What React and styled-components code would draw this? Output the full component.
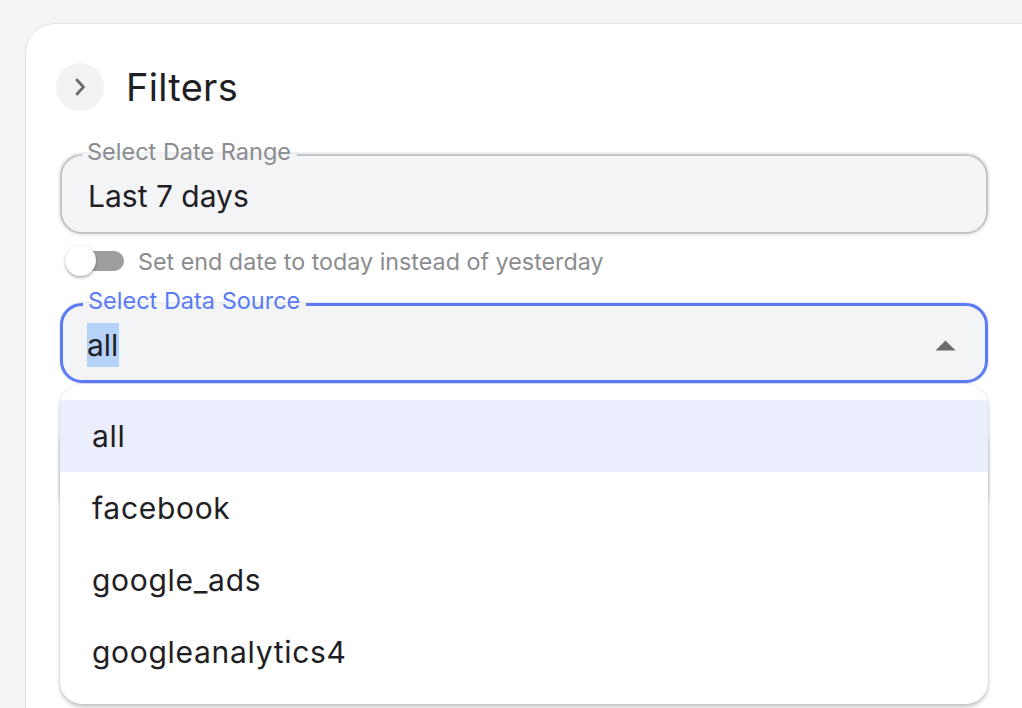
import React from "react";
import styled, { createGlobalStyle } from "styled-components";

const GlobalStyle = createGlobalStyle`
  html, body {
    margin: 0;
    padding: 0;
    background: #f3f4f6;
    overflow: hidden;
    font-family: Inter, "Liberation Sans", sans-serif;
    color: #1f2024;
  }
`;

const Page = styled.div`
  padding: 23px 0 0 25px;
  height: 708px;
  box-sizing: border-box;
`;

const Card = styled.div`
  width: 1100px;
  height: 800px;
  box-sizing: border-box;
  background: #ffffff;
  border: 1px solid #e1e2e4;
  border-radius: 30px;
  padding: 39px 0 0 34px;
  display: flex;
  flex-direction: column;
`;

const Content = styled.div`
  width: 928px;
  display: flex;
  flex-direction: column;
`;

const Header = styled.div`
  display: flex;
  align-items: center;
  gap: 22px;
  margin-left: -4px;
`;

const CollapseButton = styled.button`
  width: 48px;
  height: 48px;
  border-radius: 50%;
  border: none;
  padding: 0;
  background: #f2f2f3;
  display: flex;
  align-items: center;
  justify-content: center;
  color: #6b6b6b;
`;

const Title = styled.h2`
  margin: 0;
  font-size: 38px;
  font-weight: 400;
  letter-spacing: 0.3px;
  color: #1f2024;
`;

const Field = styled.fieldset`
  position: relative;
  margin: ${(p) => p.$top}px 0 0 0;
  padding: 0 24px 0 20px;
  height: 94px;
  box-sizing: border-box;
  background: #f3f4f6;
  border: ${(p) => (p.$focused ? "3px solid #5a7bf3" : "2px solid #c3c4c6")};
  border-radius: 22px;
  box-shadow: ${(p) => (p.$focused ? "0 0 0 1px #e6e8ee" : "0 0 0 2px #eeeff1")};
`;

const Legend = styled.legend`
  font-size: 23.5px;
  line-height: 24px;
  padding: 0 6px 6px 5px;
  color: ${(p) => (p.$focused ? "#5a7bf3" : "#8b8c8f")};
`;

const ValueRow = styled.div`
  height: 52px;
  display: flex;
  align-items: center;
  justify-content: space-between;
  padding-left: 6px;
  font-size: 30px;
  color: #1f2024;
`;

const Selected = styled.span`
  background: #b5d3f8;
  line-height: 44px;
  padding: 0 1px 0 0;
  margin-left: -2px;
`;

const ToggleRow = styled.label`
  display: flex;
  align-items: center;
  gap: 14px;
  height: 34px;
  margin-top: 10px;
  padding-left: 6px;
  font-size: 23.3px;
  color: #8b8c8f;
`;

const Switch = styled.span`
  position: relative;
  width: 58px;
  height: 20px;
  border-radius: 10px;
  background: #9e9e9e;
  flex-shrink: 0;
`;

const Thumb = styled.span`
  position: absolute;
  left: -1px;
  top: -6px;
  width: 31px;
  height: 31px;
  border-radius: 50%;
  background: #ffffff;
  box-shadow: 0 2px 3px rgba(0, 0, 0, 0.28), 0 0 1px rgba(0, 0, 0, 0.2);
`;

const SelectWrap = styled.div`
  position: relative;
`;

const Menu = styled.ul`
  position: absolute;
  top: calc(100% + 1px);
  left: 0;
  right: 0;
  z-index: 10;
  margin: 0;
  padding: 16px 0;
  list-style: none;
  background: #ffffff;
  border-radius: 22px;
  box-shadow: 0 3px 4px rgba(0, 0, 0, 0.22), 0 0 2px rgba(0, 0, 0, 0.12);
`;

const Option = styled.li`
  height: 72px;
  display: flex;
  align-items: center;
  padding-left: 32px;
  font-size: 30px;
  letter-spacing: 0.7px;
  color: #1f2024;
  background: ${(p) => (p.$active ? "#ebeffd" : "transparent")};
`;

const Chevron = () => (
  <svg width="14" height="20" viewBox="0 0 14 20" fill="none">
    <path d="M4 3 L10.5 10 L4 17" stroke="currentColor" strokeWidth="2.8" strokeLinecap="round" strokeLinejoin="round" />
  </svg>
);

const ArrowUp = () => (
  <svg width="21" height="11" viewBox="0 0 21 11" style={{ marginRight: 5 }}>
    <path d="M0.5 10.5 L10.5 0.5 L20.5 10.5 Z" fill="#6b6b6b" />
  </svg>
);

const sources = ["all", "facebook", "google_ads", "googleanalytics4"];

export default function App() {
  return (
    <>
      <GlobalStyle />
      <Page>
        <Card>
          <Header>
            <CollapseButton>
              <Chevron />
            </CollapseButton>
            <Title>Filters</Title>
          </Header>
          <Content>
            <Field $top={29}>
              <Legend>Select Date Range</Legend>
              <ValueRow>Last 7 days</ValueRow>
            </Field>
            <ToggleRow>
              <Switch>
                <Thumb />
              </Switch>
              Set end date to today instead of yesterday
            </ToggleRow>
            <SelectWrap>
              <Field $top={11} $focused>
                <Legend $focused>Select Data Source</Legend>
                <ValueRow>
                  <Selected>all</Selected>
                  <ArrowUp />
                </ValueRow>
              </Field>
              <Menu>
                {sources.map((s, i) => (
                  <Option key={s} $active={i === 0}>
                    {s}
                  </Option>
                ))}
              </Menu>
            </SelectWrap>
            <Field $top={40} />
          </Content>
        </Card>
      </Page>
    </>
  );
}
